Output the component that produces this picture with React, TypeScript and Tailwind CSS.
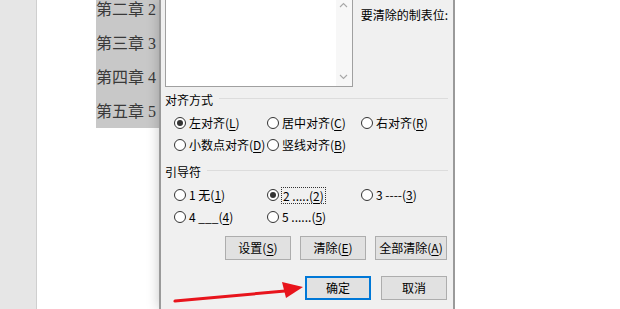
import React from "react"

const ui = { fontFamily: '"Noto Sans CJK SC", "Noto Sans", sans-serif' }
const serif = { fontFamily: '"Liberation Serif", "Noto Sans CJK SC", serif' }

function Radio({ checked, children }: { checked?: boolean; children: React.ReactNode }) {
  return (
    <div className="flex items-center gap-[3px] h-4">
      <span className="w-[12px] h-[12px] rounded-full border border-[#333] bg-white flex items-center justify-center shrink-0">
        {checked && <span className="w-[6px] h-[6px] rounded-full bg-[#333]" />}
      </span>
      <span className="text-[12px] leading-4 text-black whitespace-nowrap">{children}</span>
    </div>
  )
}

function Key({ k }: { k: string }) {
  return (
    <>
      (<span className="underline underline-offset-2">{k}</span>)
    </>
  )
}

function Btn({ w, focus, children }: { w: string; focus?: boolean; children: React.ReactNode }) {
  return (
    <div
      className={`${w} h-[24px] flex items-center justify-center text-[12px] bg-[#e1e1e1] ${
        focus ? "border-2 border-[#0078d7]" : "border border-[#adadad]"
      }`}
    >
      {children}
    </div>
  )
}

function GroupTitle({ text }: { text: string }) {
  return (
    <div className="flex items-center gap-[6px] h-4">
      <span className="text-[12px] leading-4 text-black">{text}</span>
      <div className="flex-1 h-px bg-[#dcdcdc] mb-[3px]" />
    </div>
  )
}

export default function App() {
  return (
    <div className="w-[620px] h-[309px] overflow-hidden relative flex bg-white" style={ui}>
      {/* left margin of document window */}
      <div className="w-[37px] h-full bg-[#e6e6e6] border-r border-[#cfcfcf]" />

      {/* page */}
      <div className="w-[122px] h-full bg-white">
        <div className="ml-[59px] w-[63px] h-[128px] bg-[#c8c8c8] overflow-hidden" style={serif}>
          <div className="mt-[-7px] flex flex-col text-[16px] leading-[34px] text-[#3a3a3a]">
            <span>第二章 2</span>
            <span>第三章 3</span>
            <span>第四章 4</span>
            <span>第五章 5</span>
          </div>
        </div>
      </div>

      {/* dialog */}
      <div className="w-[296px] h-full bg-[#f0f0f0] border-l-2 border-r-2 border-[#9a9a9a] shadow-[0_0_12px_rgba(0,0,0,0.22)] pl-[4px] pr-[5px] flex flex-col">
        <div className="flex">
          <div className="w-[197px] h-[87px] bg-white border border-t-0 border-[#a0a0a0] flex justify-end">
            <div className="w-[16px] h-full bg-[#f7f7f7] flex flex-col items-center justify-between py-[2px] text-[#a8a8a8]">
              <svg width="9" height="6" viewBox="0 0 9 6">
                <path d="M1 5 L4.5 1.5 L8 5" fill="none" stroke="#a8a8a8" strokeWidth="1.1" />
              </svg>
              <svg width="9" height="6" viewBox="0 0 9 6" className="mb-[4px]">
                <path d="M1 1 L4.5 4.5 L8 1" fill="none" stroke="#a8a8a8" strokeWidth="1.1" />
              </svg>
            </div>
          </div>
          <div className="ml-[8px] mt-[7px] text-[12px] leading-4 text-black whitespace-nowrap">要清除的制表位:</div>
        </div>

        <div className="mt-[5px]">
          <GroupTitle text="对齐方式" />
        </div>
        <div className="mt-[7px] pl-[9px] grid grid-cols-[93px_94px_auto] gap-y-[6px]">
          <Radio checked>
            左对齐<Key k="L" />
          </Radio>
          <Radio>
            居中对齐<Key k="C" />
          </Radio>
          <Radio>
            右对齐<Key k="R" />
          </Radio>
          <Radio>
            小数点对齐<Key k="D" />
          </Radio>
          <Radio>
            竖线对齐<Key k="B" />
          </Radio>
        </div>

        <div className="mt-[11px]">
          <GroupTitle text="引导符" />
        </div>
        <div className="mt-[7px] pl-[9px] grid grid-cols-[93px_94px_auto] gap-y-[6px]">
          <Radio>
            1 无<Key k="1" />
          </Radio>
          <div className="flex items-center gap-[2px] h-4">
            <span className="w-[12px] h-[12px] rounded-full border border-[#333] bg-white flex items-center justify-center shrink-0">
              <span className="w-[6px] h-[6px] rounded-full bg-[#333]" />
            </span>
            <span className="text-[12px] leading-[15px] text-black whitespace-nowrap border border-dotted border-[#333] px-px">
              2 .....<Key k="2" />
            </span>
          </div>
          <Radio>
            3 ----<Key k="3" />
          </Radio>
          <Radio>
            4 ___<Key k="4" />
          </Radio>
          <Radio>
            5 ......<Key k="5" />
          </Radio>
        </div>

        <div className="mt-[11px] flex justify-end gap-[9px] pr-px">
          <Btn w="w-[66px]">
            设置<Key k="S" />
          </Btn>
          <Btn w="w-[66px]">
            清除<Key k="E" />
          </Btn>
          <Btn w="w-[72px]">
            全部清除<Key k="A" />
          </Btn>
        </div>
        <div className="mt-[16px] flex justify-end gap-[10px] pr-px">
          <Btn w="w-[66px]" focus>
            确定
          </Btn>
          <Btn w="w-[66px]">取消</Btn>
        </div>
      </div>

      {/* rest of the document */}
      <div className="flex-1 h-full bg-white" />

      {/* red annotation arrow */}
      <svg className="absolute left-[170px] top-[276px]" width="140" height="30" viewBox="0 0 140 30">
        <path d="M5 25 L115 15" stroke="#e8141c" strokeWidth="3" strokeLinecap="round" />
        <polygon points="112,6 133,11 116,22" fill="#e8141c" />
      </svg>
    </div>
  )
}
